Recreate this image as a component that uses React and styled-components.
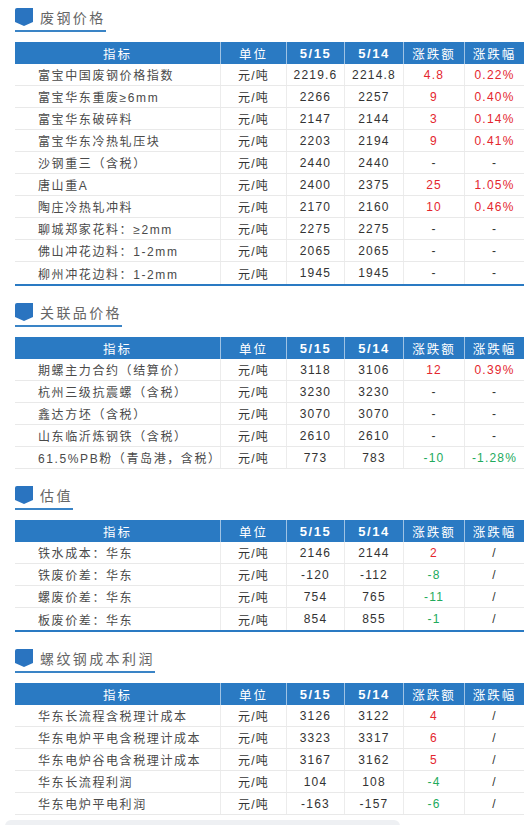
import React from "react";
import styled, { createGlobalStyle } from "styled-components";

const Global = createGlobalStyle`
  html, body { margin: 0; padding: 0; background: #ffffff; }
  body { font-family: "Liberation Sans", "Noto Sans CJK SC", sans-serif; color: #333; }
`;

const BLUE = "#2a7ac3";
const COLS = "205px 66px 58px 59px 61px 60px";

const Page = styled.div`
  width: 509px;
  padding: 8px 0 0 15px;
  display: flex;
  flex-direction: column;
`;

const Section = styled.section`
  display: flex;
  flex-direction: column;
  margin-bottom: 17px;
  &:last-of-type { margin-bottom: 0; }
`;

const TitleBar = styled.div`
  align-self: flex-start;
  display: inline-flex;
  align-items: flex-start;
  gap: 7px;
  padding-bottom: 4px;
  border-bottom: 2px solid #3a84c6;
  margin-bottom: 10px;
`;

const TitleText = styled.h2`
  margin: 0;
  font-family: "Noto Sans CJK SC", sans-serif;
  font-weight: 400;
  font-size: 14px;
  line-height: 18px;
  letter-spacing: 2.4px;
  color: #666;
`;

const Table = styled.div`
  display: flex;
  flex-direction: column;
  border-bottom: ${(p) => (p.$accent ? `2px solid ${BLUE}` : "none")};
`;

const HeadRow = styled.div`
  display: grid;
  grid-template-columns: ${COLS};
  height: 22px;
  background: ${BLUE};
`;

const HeadCell = styled.div`
  display: flex;
  align-items: center;
  justify-content: center;
  color: #fff;
  font-size: ${(p) => (p.$num ? "13px" : "12.5px")};
  font-weight: ${(p) => (p.$num ? 700 : 400)};
  letter-spacing: ${(p) => (p.$num ? "1.5px" : "2px")};
  font-family: ${(p) => (p.$num ? `"Liberation Sans", sans-serif` : `"Noto Sans CJK SC", sans-serif`)};
  & + & { border-left: 1px solid rgba(255, 255, 255, 0.55); }
`;

const Row = styled.div`
  display: grid;
  grid-template-columns: ${COLS};
  height: 22px;
  box-sizing: border-box;
  border-bottom: 1px solid #e9e9e9;
  ${(p) => (p.$accent ? "&:last-child { border-bottom: none; }" : "")}
`;

const Cell = styled.div`
  display: flex;
  align-items: center;
  justify-content: ${(p) => (p.$left ? "flex-start" : "center")};
  padding-left: ${(p) => (p.$left ? "23px" : "0")};
  font-size: 12px;
  letter-spacing: ${(p) => (p.$left ? "1.6px" : "1.2px")};
  color: ${(p) =>
    p.$tone === "up" ? "#e4262e" : p.$tone === "down" ? "#22aa5c" : p.$left ? "#4a4a4a" : "#333"};
  white-space: nowrap;
  & + & { border-left: 1px solid #ececec; }
`;

const Footer = styled.div`
  margin: 5px 0 0 -10px;
  width: 395px;
  height: 10px;
  background: #eef0f3;
  border-radius: 6px 6px 0 0;
`;

const Icon = () => (
  <svg width="18" height="18" viewBox="0 0 18 18">
    <path d="M2 0 H18 V14 L9 18 L0 14 V2 Q0 0 2 0 Z" fill="#2a74c0" />
  </svg>
);

const tone = (v) => {
  if (v === "-" || v === "/") return undefined;
  return v.startsWith("-") ? "down" : "up";
};

const sections = [
  {
    title: "废钢价格",
    accent: true,
    rows: [
      ["富宝中国废钢价格指数", "2219.6", "2214.8", "4.8", "0.22%"],
      ["富宝华东重废≥6mm", "2266", "2257", "9", "0.40%"],
      ["富宝华东破碎料", "2147", "2144", "3", "0.14%"],
      ["富宝华东冷热轧压块", "2203", "2194", "9", "0.41%"],
      ["沙钢重三（含税）", "2440", "2440", "-", "-"],
      ["唐山重A", "2400", "2375", "25", "1.05%"],
      ["陶庄冷热轧冲料", "2170", "2160", "10", "0.46%"],
      ["聊城郑家花料：≥2mm", "2275", "2275", "-", "-"],
      ["佛山冲花边料：1-2mm", "2065", "2065", "-", "-"],
      ["柳州冲花边料：1-2mm", "1945", "1945", "-", "-"],
    ],
  },
  {
    title: "关联品价格",
    accent: false,
    rows: [
      ["期螺主力合约（结算价）", "3118", "3106", "12", "0.39%"],
      ["杭州三级抗震螺（含税）", "3230", "3230", "-", "-"],
      ["鑫达方坯（含税）", "3070", "3070", "-", "-"],
      ["山东临沂炼钢铁（含税）", "2610", "2610", "-", "-"],
      ["61.5%PB粉（青岛港，含税）", "773", "783", "-10", "-1.28%"],
    ],
  },
  {
    title: "估值",
    accent: true,
    rows: [
      ["铁水成本：华东", "2146", "2144", "2", "/"],
      ["铁废价差：华东", "-120", "-112", "-8", "/"],
      ["螺废价差：华东", "754", "765", "-11", "/"],
      ["板废价差：华东", "854", "855", "-1", "/"],
    ],
  },
  {
    title: "螺纹钢成本利润",
    accent: false,
    rows: [
      ["华东长流程含税理计成本", "3126", "3122", "4", "/"],
      ["华东电炉平电含税理计成本", "3323", "3317", "6", "/"],
      ["华东电炉谷电含税理计成本", "3167", "3162", "5", "/"],
      ["华东长流程利润", "104", "108", "-4", "/"],
      ["华东电炉平电利润", "-163", "-157", "-6", "/"],
    ],
  },
];

export default function App() {
  return (
    <>
      <Global />
      <Page>
        {sections.map((s) => (
          <Section key={s.title}>
            <TitleBar>
              <Icon />
              <TitleText>{s.title}</TitleText>
            </TitleBar>
            <Table $accent={s.accent}>
              <HeadRow>
                <HeadCell>指标</HeadCell>
                <HeadCell>单位</HeadCell>
                <HeadCell $num>5/15</HeadCell>
                <HeadCell $num>5/14</HeadCell>
                <HeadCell>涨跌额</HeadCell>
                <HeadCell>涨跌幅</HeadCell>
              </HeadRow>
              {s.rows.map((r) => (
                <Row key={r[0]} $accent={s.accent}>
                  <Cell $left>{r[0]}</Cell>
                  <Cell>元/吨</Cell>
                  <Cell>{r[1]}</Cell>
                  <Cell>{r[2]}</Cell>
                  <Cell $tone={tone(r[3])}>{r[3]}</Cell>
                  <Cell $tone={tone(r[4])}>{r[4]}</Cell>
                </Row>
              ))}
            </Table>
          </Section>
        ))}
        <Footer />
      </Page>
    </>
  );
}
